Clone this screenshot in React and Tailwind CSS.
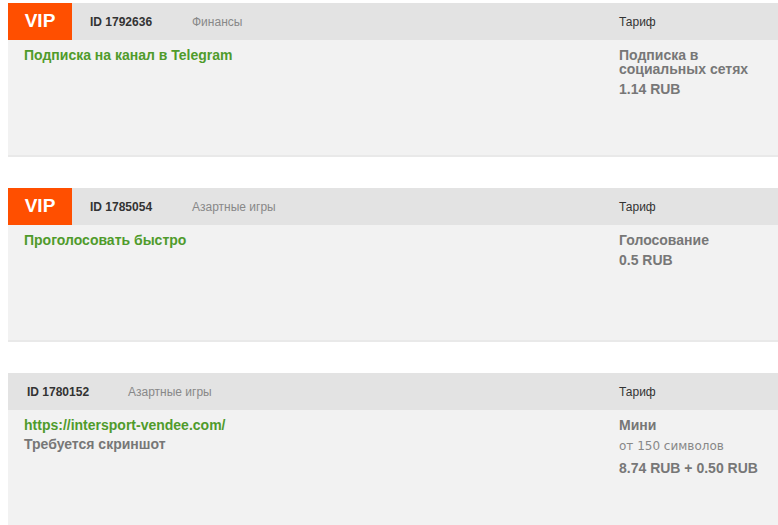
import React from "react";

const sans = { fontFamily: '"Liberation Sans", Arial, sans-serif' };

function Card({ vip, id, cat, left, right }) {
  return (
    <div className="ml-2 bg-[#f2f2f2] border-b-2 border-[#e9e9e9]">
      <div className="flex h-[37px] items-center bg-[#e3e3e3] text-[12px]">
        {vip && (
          <div className="flex h-full w-[64px] items-center justify-center bg-[#ff4f00] text-[19px] font-bold text-white">
            VIP
          </div>
        )}
        <div className={`${vip ? "pl-[18px] w-[120px]" : "pl-[19px] w-[120px]"} shrink-0 font-bold text-[#333]`}>{id}</div>
        <div className="flex-1 text-[#888]">{cat}</div>
        <div className="w-[159px] shrink-0 text-[#333]">Тариф</div>
      </div>
      <div className="flex min-h-[115px]">
        <div className="flex-1 pl-4 pt-[8px]">{left}</div>
        <div className="w-[159px] shrink-0 pt-[8px]">{right}</div>
      </div>
    </div>
  );
}

export default function App() {
  return (
    <div className="bg-white pt-[3px] w-[778px] h-[525px] overflow-hidden" style={sans}>
      <Card
        vip
        id="ID 1792636"
        cat="Финансы"
        left={<div className="text-[14px] font-bold leading-[15px] text-[#4f9b2b]">Подписка на канал в Telegram</div>}
        right={
          <div className="w-[140px] text-[14px] font-bold leading-[14px] text-[#777]">
            <div>Подписка в социальных сетях</div>
            <div className="mt-[6px]">1.14 RUB</div>
          </div>
        }
      />
      <div className="h-[31px]" />
      <Card
        vip
        id="ID 1785054"
        cat="Азартные игры"
        left={<div className="text-[14px] font-bold leading-[15px] text-[#4f9b2b]">Проголосовать быстро</div>}
        right={
          <div className="text-[14px] font-bold leading-[14px] text-[#777]">
            <div>Голосование</div>
            <div className="mt-[6px]">0.5 RUB</div>
          </div>
        }
      />
      <div className="h-[31px]" />
      <Card
        id="ID 1780152"
        cat="Азартные игры"
        left={
          <div>
            <div className="text-[14px] font-bold leading-[15px] text-[#4f9b2b]">https://intersport-vendee.com/</div>
            <div className="mt-[4px] text-[14px] font-bold leading-[15px] text-[#777]">Требуется скриншот</div>
          </div>
        }
        right={
          <div className="text-[14px] font-bold leading-[14px] text-[#777]">
            <div>Мини</div>
            <div className="mt-[7px] text-[12px] font-normal text-[#888]" style={{ fontFamily: '"DejaVu Sans", Verdana, sans-serif' }}>
              от 150 символов
            </div>
            <div className="mt-[8px]">8.74 RUB + 0.50 RUB</div>
          </div>
        }
      />
    </div>
  );
}
